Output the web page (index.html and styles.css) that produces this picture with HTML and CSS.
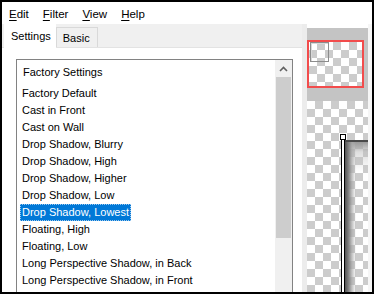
FILE: index.html
```html
<!DOCTYPE html>
<html lang="en">
<head>
    <meta charset="UTF-8">
    <title>Shadow presets</title>
    <link rel="stylesheet" href="styles.css">
</head>
<body>
    <div class="window">
        <div class="menubar">
            <span class="menu"><u>E</u>dit</span>
            <span class="menu"><u>F</u>ilter</span>
            <span class="menu"><u>V</u>iew</span>
            <span class="menu"><u>H</u>elp</span>
        </div>

        <div class="main">
            <!-- Panel con pestañas y la lista de presets -->
            <div class="tabs">
                <div class="tabstrip">
                    <div class="tab active">Settings</div>
                    <div class="tab">Basic</div>
                </div>
                <div class="page">
                    <div class="listbox">
                        <div class="items">
                            <div class="group">Factory Settings</div>
                            <div class="item"><span>Factory Default</span></div>
                            <div class="item"><span>Cast in Front</span></div>
                            <div class="item"><span>Cast on Wall</span></div>
                            <div class="item"><span>Drop Shadow, Blurry</span></div>
                            <div class="item"><span>Drop Shadow, High</span></div>
                            <div class="item"><span>Drop Shadow, Higher</span></div>
                            <div class="item"><span>Drop Shadow, Low</span></div>
                            <div class="item selected"><span>Drop Shadow, Lowest</span></div>
                            <div class="item"><span>Floating, High</span></div>
                            <div class="item"><span>Floating, Low</span></div>
                            <div class="item"><span>Long Perspective Shadow, in Back</span></div>
                            <div class="item"><span>Long Perspective Shadow, in Front</span></div>
                        </div>
                        <div class="scrollbar">
                            <div class="sb-button">
                                <svg width="9" height="6" viewBox="0 0 9 6"><polyline points="1,5 4.5,1.5 8,5" fill="none" stroke="#606060" stroke-width="1.6"/></svg>
                            </div>
                            <div class="sb-thumb"></div>
                            <div class="sb-track"></div>
                        </div>
                    </div>
                </div>
            </div>

            <!-- Navegador y vista previa -->
            <div class="side">
                <div class="nav">
                    <div class="thumb">
                        <div class="viewport"></div>
                    </div>
                </div>
                <div class="canvas">
                    <div class="handle"></div>
                    <div class="edge"></div>
                    <div class="shadow"></div>
                </div>
            </div>
        </div>
    </div>
</body>
</html>
```

FILE: styles.css
```css
body {
    margin: 0;
    background-color: #fff;
    font-family: "Liberation Sans", Arial, sans-serif;
    font-size: 11px;
    color: #000;
}

.window {
    width: 374px;
    height: 294px;
    box-sizing: border-box;
    border: 2px solid #000;
    display: flex;
    flex-direction: column;
    overflow: hidden;
}

/* Barra de menú */
.menubar {
    height: 22px;
    display: flex;
    align-items: center;
    padding-top: 2px;
    box-sizing: border-box;
    font-size: 11.5px;
}

.menu {
    padding: 0 7px;
}

.menu u {
    text-decoration-thickness: 1px;
    text-underline-offset: 2px;
}

.main {
    flex: 1;
    display: flex;
    overflow: hidden;
}

/* Pestañas */
.tabs {
    width: 300px;
    display: flex;
    flex-direction: column;
}

.tabstrip {
    height: 24px;
    box-sizing: border-box;
    background-color: #f0f0f0;
    border-bottom: 1px solid #e3e3e3;
    display: flex;
    align-items: flex-end;
    padding-left: 2px;
}

.tab {
    height: 20px;
    box-sizing: border-box;
    padding: 4px 7px 0 6px;
    border: 1px solid #d9d9d9;
    border-bottom: none;
    background-color: #f0f0f0;
}

.tab.active {
    height: 24px;
    margin-bottom: -1px;
    padding: 5px 4px 0 6px;
    background-color: #fff;
    border-color: #fff;
}

.page {
    flex: 1;
    background-color: #fff;
    padding: 11px 9px 0 14px;
    overflow: hidden;
}

/* Lista de presets */
.listbox {
    height: 260px;
    border: 1px solid #828282;
    display: flex;
}

.items {
    flex: 1;
    padding-top: 4px;
    white-space: nowrap;
    overflow: hidden;
}

.group {
    line-height: 17px;
    padding-left: 6px;
    margin-bottom: 3px;
}

.item {
    height: 17px;
    line-height: 15px;
    padding: 1px 0 0 4px;
    box-sizing: border-box;
}

.item span {
    display: inline-block;
    padding: 0 1px;
    border: 1px dotted transparent;
    margin-left: -1px;
}

.item.selected span {
    background-color: #0078d7;
    color: #fff;
    border-color: #9cc8ee;
}

.scrollbar {
    width: 17px;
    background-color: #f0f0f0;
    display: flex;
    flex-direction: column;
}

.sb-button {
    height: 17px;
    display: flex;
    align-items: center;
    justify-content: center;
}

.sb-thumb {
    height: 161px;
    margin: 0 1px;
    background-color: #cdcdcd;
}

.sb-track {
    flex: 1;
}

/* Panel derecho */
.side {
    width: 70px;
    box-sizing: border-box;
    border-left: 5px solid #ececec;
    border-right: 4px solid #f6f6f6;
    display: flex;
    flex-direction: column;
}

.nav {
    margin-top: 4px;
    background-color: #c4c4c4;
    padding: 12px 4px 13px 0;
}

.thumb {
    height: 48px;
    box-sizing: border-box;
    border: 2px solid #f24c4c;
    position: relative;
    background-color: #fff;
    background-image: linear-gradient(45deg, #cccccc 25%, transparent 25%, transparent 75%, #cccccc 75%),
                      linear-gradient(45deg, #cccccc 25%, transparent 25%, transparent 75%, #cccccc 75%);
    background-size: 16px 16px;
    background-position: 0 0, 8px 8px;
}

.viewport {
    position: absolute;
    left: 1px;
    top: 0;
    width: 19px;
    height: 20px;
    box-sizing: border-box;
    border: 1px solid #8c8c8c;
    box-shadow: inset 1px 1px 0 #d8d8d8;
}

.canvas {
    flex: 1;
    position: relative;
    overflow: hidden;
    background-color: #fff;
    background-image: linear-gradient(45deg, #cccccc 25%, transparent 25%, transparent 75%, #cccccc 75%),
                      linear-gradient(45deg, #cccccc 25%, transparent 25%, transparent 75%, #cccccc 75%);
    background-size: 16px 16px;
    background-position: 0 0, 8px 8px;
}

.handle {
    position: absolute;
    left: 33px;
    top: 33px;
    width: 6px;
    height: 6px;
    box-sizing: border-box;
    border: 1px solid #000;
    background-color: #fff;
}

.edge {
    position: absolute;
    left: 34px;
    top: 39px;
    bottom: 0;
    width: 2px;
    background-color: #fff;
    border-left: 1px solid #000;
    border-right: 1px solid #000;
}

.shadow {
    position: absolute;
    left: 38px;
    top: 39px;
    right: 0;
    bottom: 0;
    border-top: 2px solid #4a4a4a;
    background-image: linear-gradient(to right, #555, #7a7a7a 3px, rgba(170, 170, 170, 0.7) 7px, rgba(255, 255, 255, 0) 11px),
                      linear-gradient(to bottom, #9a9a9a, rgba(190, 190, 190, 0.5) 10px, rgba(255, 255, 255, 0) 30px);
}
```
